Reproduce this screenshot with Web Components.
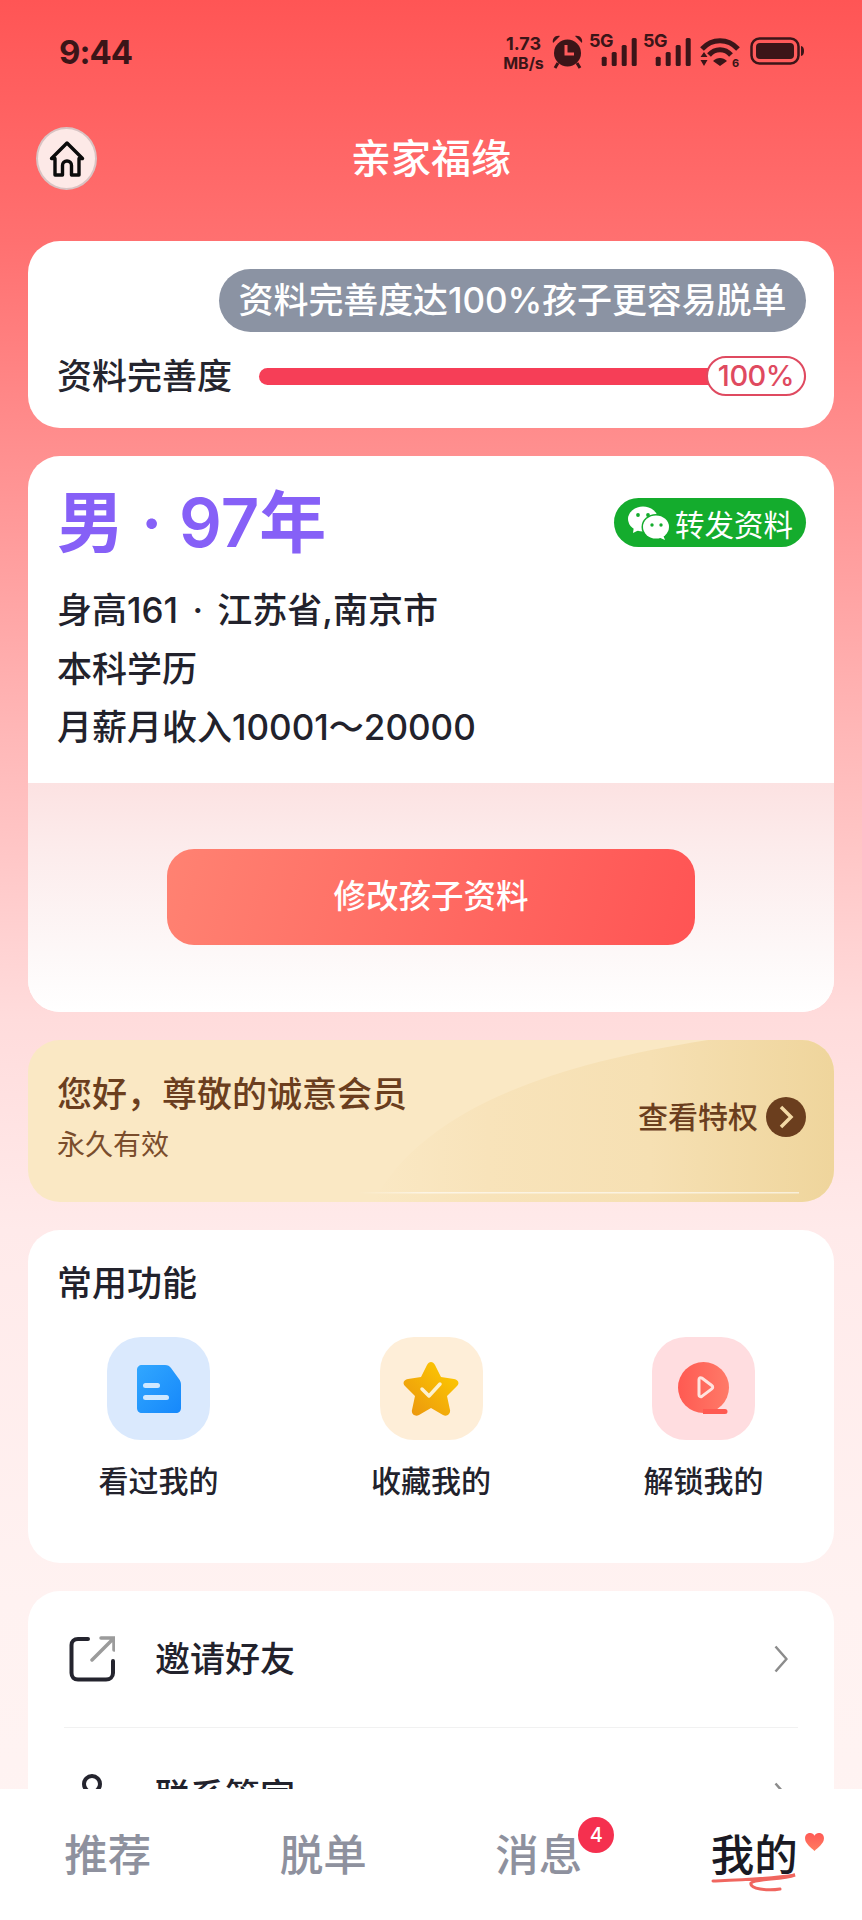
<!DOCTYPE html>
<html lang="zh"><head><meta charset="utf-8">
<style>
html,body{margin:0;padding:0}
body{width:862px;height:1920px;overflow:hidden;font-family:Inter,"Noto Sans CJK SC",sans-serif;color:#22222c}
</style></head>
<body>
<app-shell>
  <status-bar></status-bar>
  <nav-bar title="亲家福缘"></nav-bar>
  <progress-card></progress-card>
  <profile-card></profile-card>
  <vip-card></vip-card>
  <func-card></func-card>
  <menu-card></menu-card>
  <tab-bar slot="tabs"></tab-bar>
</app-shell>
<script>
const def=(name,html)=>customElements.define(name,class extends HTMLElement{
  constructor(){super();this.attachShadow({mode:'open'}).innerHTML=typeof html==='function'?html(this):html;}
});
def('app-shell',`<style>
:host{display:flex;flex-direction:column;width:862px;height:1920px;overflow:hidden;
background:linear-gradient(180deg,#ff5555 0,#ff7070 240px,#ff8f8f 450px,#ffb8b8 740px,#ffdcdc 1020px,#ffeaea 1230px,#fff2f1 1600px,#fff4f3 1920px)}
.scroll{flex:1;min-height:0;overflow:hidden;display:flex;flex-direction:column}
</style><div class="scroll"><slot></slot></div><slot name="tabs"></slot>`);

const signal=`<svg style="display:block" width="50" height="38" viewBox="0 -4 50 38" fill="#3b1518"><text x="0" y="14" font-family="Inter,sans-serif" font-size="18" font-weight="700" letter-spacing="-.5">5G</text><rect x="12.7" y="23.7" width="5" height="9.3" rx="1.5"/><rect x="22.7" y="19" width="5" height="14" rx="1.5"/><rect x="32.7" y="12" width="5" height="21" rx="1.5"/><rect x="42.7" y="5" width="5" height="28" rx="1.5"/></svg>`;
def('status-bar',`<style>
:host{display:flex;justify-content:space-between;height:127px;box-sizing:border-box;padding:0 58px 0 59px;color:#3b1518;flex:none}
.t{font-size:33px;font-weight:700;line-height:40px;margin-top:32px;letter-spacing:-1px}
.r{display:flex;align-items:flex-start;margin-top:33px}
.sp{width:43px;text-align:center;font-weight:700;font-size:16px;line-height:19px;margin-top:1px;white-space:nowrap}
svg{display:block;flex:none}
</style>
<div class="t">9:44</div>
<div class="r">
<div class="sp"><span style="font-size:18px">1.73</span><br>MB/s</div>
<svg style="margin:1px 0 0 6px" width="33" height="35" viewBox="0 0 33 35"><path d="M2 9C1 5 4 1 9 2ZM31 9c1-4-2-8-7-7Z" fill="#3b1518"/><circle cx="16.500" cy="19" r="13.500" fill="#3b1518"/><path d="M15 11v9h8" fill="none" stroke="#ff5c5c" stroke-width="3"/><path d="M7 29l-3 5M26 29l3 5" stroke="#3b1518" stroke-width="3"/></svg>
<span style="margin:-4px -2px 0 5px">${signal}</span>
<span style="margin:-4px -2px 0 6px">${signal}</span>
<svg style="margin:4px 0 0 8px" width="43" height="36" viewBox="0 0 43 36"><path d="M3 12C13 1 29 1 39 12" fill="none" stroke="#3b1518" stroke-width="5"/><path d="M10 18C16 11 26 11 32 18" fill="none" stroke="#3b1518" stroke-width="5"/><path d="M14 24c4-4 10-4 14 0l-7 5Z" fill="#3b1518"/><path d="M4 15l3.500 5h-7ZM4 29l3.500-6h-7Z" transform="translate(1 0)" fill="#3b1518"/><text x="33" y="30" font-family="Inter,sans-serif" font-size="11" font-weight="700" fill="#3b1518">6</text></svg>
<svg style="margin:4px 0 0 8px" width="54" height="28" viewBox="0 0 54 28"><rect x="1.500" y="1.500" width="47" height="25" rx="8" fill="none" stroke="#3b1518" stroke-width="2.500"/><rect x="6" y="6" width="38" height="16" rx="4" fill="#3b1518"/><path d="M51 9c2 .5 3 2 3 5s-1 4.500-3 5Z" fill="#3b1518"/></svg>
</div>`);

def('nav-bar',el=>`<style>
:host{display:flex;align-items:center;justify-content:center;height:63px;position:relative;flex:none;margin-bottom:51px}
.b{position:absolute;left:36px;top:0;width:61px;height:63px;box-sizing:border-box;border-radius:50%;background:#fde9e7;border:2px solid #d9c3c3;display:flex;align-items:center;justify-content:center}
.h{font-size:40px;line-height:63px;font-weight:500;color:#fff}
</style>
<div class="b"><svg width="36" height="38" viewBox="0 0 36 38" fill="none" stroke="#0b0b0b" stroke-width="3.400" stroke-linejoin="round" stroke-linecap="round"><path d="M2.500 18.500 18 3l15.500 15.500H30V35h-7.500V25.500a4.500 4.500 0 0 0-9 0V35H6V18.500Z"/></svg></div>
<div class="h">${el.getAttribute('title')}</div>`);

def('progress-card',`<style>
:host{display:block;margin:0 28px 28px;background:#fff;border-radius:32px;padding:28px 28px 32px 29px;flex:none}
.tip{width:587px;margin-left:auto;height:63px;line-height:63px;border-radius:32px;background:#8b93a3;color:#fff;font-size:35px;font-weight:500;text-align:center;letter-spacing:-.1px;box-sizing:border-box;white-space:nowrap}
.row{display:flex;align-items:center;height:40px;margin-top:24px}
.l{font-size:35px;width:172px;line-height:40px;margin-right:30px;color:#25252e;font-weight:500;white-space:nowrap}
.tr{flex:1;height:17px;position:relative;background:#f63e57;border-radius:9px}
.bd{position:absolute;right:0;top:-12px;width:100px;height:40px;box-sizing:border-box;background:#fff;border:2px solid #df4a60;border-radius:20px;color:#df4a60;font-size:29px;line-height:36px;text-align:center;letter-spacing:-.5px;font-weight:500}
</style>
<div class="tip">资料完善度达100%孩子更容易脱单</div>
<div class="row"><div class="l">资料完善度</div><div class="tr"><div class="bd">100%</div></div></div>`);

def('profile-card',`<style>
:host{display:block;margin:0 28px 28px;background:#fff;border-radius:32px;overflow:hidden;flex:none}
.top{padding:30px 28px 26.500px 29px}
.hd{display:flex;justify-content:space-between;align-items:flex-start;margin-bottom:21px}
.ti{font-size:67px;line-height:74px;font-weight:600;color:#8660f7;white-space:nowrap}
.chip{margin-top:12px;width:192px;height:49px;box-sizing:border-box;border-radius:25px;background:#14ac2d;color:#fff;display:flex;align-items:center;padding-left:14px;gap:5px;font-size:29.500px;white-space:nowrap}
.ln{font-size:35px;font-weight:500;line-height:58.500px;color:#22222c;white-space:nowrap}
.bot{height:229px;box-sizing:border-box;padding-top:66px;background:linear-gradient(180deg,#fce2e2 0,#fcebeb 60px,#fdf8f8 170px,#fff 229px)}
.btn{width:528px;height:96px;margin:0 auto;border-radius:27px;background:linear-gradient(105deg,#ff8272,#ff5454);color:#fff;text-align:center;font-size:32.500px;line-height:96px;font-weight:500}
</style>
<div class="top">
<div class="hd"><div class="ti">男 · 97年</div>
<div class="chip"><svg width="42" height="34" viewBox="0 0 42 34"><ellipse cx="15" cy="13" rx="15" ry="12.500" fill="#fff"/><path d="M6 20l-1 7 8-4Z" fill="#fff"/><circle cx="10" cy="9" r="1.900" fill="#14ac2d"/><circle cx="20" cy="9" r="1.900" fill="#14ac2d"/><ellipse cx="28" cy="21" rx="14.500" ry="13" fill="#14ac2d"/><ellipse cx="28" cy="21" rx="13" ry="11.500" fill="#fff"/><path d="M35 29l2 5-7-3Z" fill="#fff"/><circle cx="24" cy="19" r="1.700" fill="#14ac2d"/><circle cx="33" cy="19" r="1.700" fill="#14ac2d"/></svg><span>转发资料</span></div></div>
<div class="ln" style="word-spacing:5px">身高161 · 江苏省,南京市</div>
<div class="ln">本科学历</div>
<div class="ln">月薪月收入10001～20000</div>
</div>
<div class="bot"><div class="btn">修改孩子资料</div></div>`);

def('vip-card',`<style>
:host{display:block;margin:0 28px 28px;height:162px;border-radius:32px;background:#fae8c4;position:relative;overflow:hidden;flex:none;color:#6b3e1e}
svg.bg{position:absolute;inset:0}
.c{position:relative;display:flex;justify-content:space-between;align-items:flex-start;padding:32px 28px 0 29px}
.a{font-size:35px;line-height:44px;font-weight:500;color:#6b3e1e;white-space:nowrap}
.s{font-size:28px;line-height:40px;margin-top:9px;color:#7a4d2c}
.r{display:flex;align-items:center;gap:8px;margin-top:25px;font-size:30px;line-height:40px;font-weight:500}
</style>
<svg class="bg" width="806" height="162" viewBox="0 0 806 162"><defs><linearGradient id="g" x1="0" x2="1" y1="0" y2="0"><stop offset="0" stop-color="#fae8c4"/><stop offset=".25" stop-color="#f8e3ba"/><stop offset=".6" stop-color="#f6e0b3"/><stop offset="1" stop-color="#efd59c"/></linearGradient><linearGradient id="w" x1="0" x2="1" y1="0" y2="0"><stop offset="0" stop-color="#fff" stop-opacity="0"/><stop offset=".15" stop-color="#fff" stop-opacity=".6"/><stop offset="1" stop-color="#fff" stop-opacity=".6"/></linearGradient></defs><path d="M345 162C395 70 520 25 680 0H806V162Z" fill="url(#g)"/><rect x="330" y="152" width="441" height="1.500" fill="url(#w)"/></svg>
<div class="c"><div><div class="a">您好，尊敬的诚意会员</div><div class="s">永久有效</div></div>
<div class="r"><span>查看特权</span><svg width="40" height="40" viewBox="0 0 40 40"><circle cx="20" cy="20" r="20" fill="#6b3e1e"/><path d="M15 10l10 10-10 10" fill="none" stroke="#f3d9a5" stroke-width="3.500"/></svg></div></div>`);

def('func-item',el=>`<style>
:host{display:flex;flex-direction:column;align-items:center;width:118px}
.i{width:103px;height:103px;border-radius:34px;display:flex;align-items:center;justify-content:center;background:${el.getAttribute('bg')}}
.l{font-size:30px;font-weight:500;line-height:40px;margin-top:21px;white-space:nowrap;color:#22222c}
</style><div class="i"><slot></slot></div><div class="l">${el.getAttribute('label')}</div>`);

def('func-card',`<style>
:host{display:block;margin:0 28px 28px;background:#fff;border-radius:32px;padding:31px 0 62px;flex:none}
.h{font-size:35px;line-height:44px;padding-left:29px;margin-bottom:32px;font-weight:500;color:#22222c}
.g{display:flex;justify-content:space-between;padding:0 71.500px}
svg{display:block}
</style>
<div class="h">常用功能</div>
<div class="g">
<func-item bg="#dae9fd" label="看过我的"><svg width="44" height="48" viewBox="0 0 44 48"><defs><linearGradient id="a" x1="0" x2="1" y1="0" y2="1"><stop offset="0" stop-color="#31a7ff"/><stop offset="1" stop-color="#1688fb"/></linearGradient></defs><path d="M5 0H28C31 0 32.500 1 34 3L42 14C43.300 16 44 17 44 20V43C44 46 42 48 39 48H5C2 48 0 46 0 43V5C0 2 2 0 5 0Z" fill="url(#a)"/><rect x="6" y="18" width="17" height="5" rx="2.500" fill="#cfe8ff"/><rect x="6" y="30" width="26" height="5" rx="2.500" fill="#cfe8ff"/></svg></func-item>
<func-item bg="#feeed8" label="收藏我的"><svg width="56" height="54" viewBox="0 0 56 54"><defs><linearGradient id="b" x1="0" x2="1" y1="1" y2="0"><stop offset="0" stop-color="#ea930f"/><stop offset="1" stop-color="#ffcf00"/></linearGradient></defs><path d="M24 3c2-4 6-4 8 0l6 12 13 2c4 .6 6 4 3 7l-10 10 3 14c.8 4-3 7-7 5L28 46l-12 7c-4 2-8-1-7-5l3-14L2 24c-3-3-1-6.400 3-7l13-2Z" fill="url(#b)"/><path d="M19 27l7 7 11-12" fill="none" stroke="#fdf1cf" stroke-width="3.500" stroke-linecap="round" stroke-linejoin="round"/></svg></func-item>
<func-item bg="#ffdde0" label="解锁我的"><svg width="52" height="54" viewBox="0 0 52 54"><defs><linearGradient id="c" x1="0" x2="1" y1="0" y2="0"><stop offset="0" stop-color="#ff5a52"/><stop offset="1" stop-color="#ff7a68"/></linearGradient></defs><ellipse cx="25.500" cy="25.500" rx="25.500" ry="25.500" fill="url(#c)"/><path d="M25 47H47a2.500 2.500 0 0 1 0 5H25Z" fill="#ff5a52"/><path d="M21 17.500c0-1.500 1.500-2.300 2.800-1.500l10 7.500c1.200.9 1.200 2.500 0 3.400l-10 7.500c-1.300.8-2.800 0-2.800-1.500Z" fill="none" stroke="#ffe3de" stroke-width="3" stroke-linejoin="round"/></svg></func-item>
</div>`);

def('menu-row',el=>`<style>
:host{display:flex;align-items:center;height:136px;padding:0 46px 0 41px}
.ic{width:46px;display:flex;flex:none;margin-right:40px}
.t{flex:1;font-size:35px;line-height:44px;color:#22222c;font-weight:500}
svg{display:block}
</style><div class="ic"><slot></slot></div><div class="t">${el.getAttribute('label')}</div>
<svg width="14" height="28" viewBox="0 0 14 28"><path d="M1.500 1.500 12.500 14 1.500 26.500" fill="none" stroke="#8c8c8c" stroke-width="2.500" stroke-linejoin="round"/></svg>`);

def('menu-card',`<style>
:host{display:block;margin:0 28px;background:#fff;border-radius:32px;flex:none}
.d{height:1px;background:#f1f1f1;margin:0 36px}
svg{display:block}
</style>
<menu-row label="邀请好友"><svg width="46" height="46" viewBox="0 0 46 46" fill="none"><path d="M19 3H9C5 3 2.500 5.500 2.500 9V37C2.500 41 5 43.500 9 43.500H37C41 43.500 44 41 44 37V25" stroke="#24242e" stroke-width="4" stroke-linecap="round"/><path d="M23 24 44 3M32 2H45V14" stroke="#9b9b9b" stroke-width="3.500" stroke-linecap="round"/></svg></menu-row>
<div class="d"></div>
<menu-row label="联系管家"><svg width="46" height="46" viewBox="0 0 46 46" fill="none"><circle cx="23" cy="11" r="8" stroke="#24242e" stroke-width="4"/><path d="M5 42c2-12 10-17 18-17s16 5 18 17" stroke="#24242e" stroke-width="4"/></svg></menu-row>`);

def('tab-item',el=>`<style>
:host{flex:1;display:flex;justify-content:center;padding-top:36px}
.w{position:relative;font-size:43.500px;line-height:60px;font-weight:500;color:${el.hasAttribute('active')?'#1a1a24':'#8e919e'};white-space:nowrap}
</style><div class="w">${el.getAttribute('label')}<slot></slot></div>`);

def('tab-bar',`<style>
:host{display:flex;height:131px;flex:none;background:#fff}
.bd{position:absolute;left:83px;top:-8px;width:36px;height:36px;border-radius:50%;background:#f5304f;color:#fff;font-size:20px;line-height:36px;text-align:center;font-weight:500}
svg{position:absolute}
</style>
<tab-item label="推荐"></tab-item><tab-item label="脱单"></tab-item>
<tab-item label="消息"><div class="bd">4</div></tab-item>
<tab-item label="我的" active>
<svg style="left:94px;top:8px" width="19" height="18" viewBox="0 0 20 19"><defs><linearGradient id="h" x1="0" x2="0" y1="0" y2="1"><stop offset="0" stop-color="#ff5a56"/><stop offset="1" stop-color="#ff7d60"/></linearGradient></defs><path d="M10 19C6 15 0 11 0 5.500 0 2 2.500 0 5.500 0 7.500 0 9 1 10 3c1-2 2.500-3 4.500-3C17.500 0 20 2 20 5.500 20 11 14 15 10 19Z" fill="url(#h)"/></svg>
<svg style="left:-1px;top:47px" width="88" height="22" viewBox="0 0 88 22" fill="none"><path d="M3 9C30 8 60 7 85 3 72 8 46 6 41 11c-2 6 17 8 29 6" stroke="#f0665f" stroke-width="3" stroke-linecap="round"/></svg>
</tab-item>`);
</script>
</body></html>
